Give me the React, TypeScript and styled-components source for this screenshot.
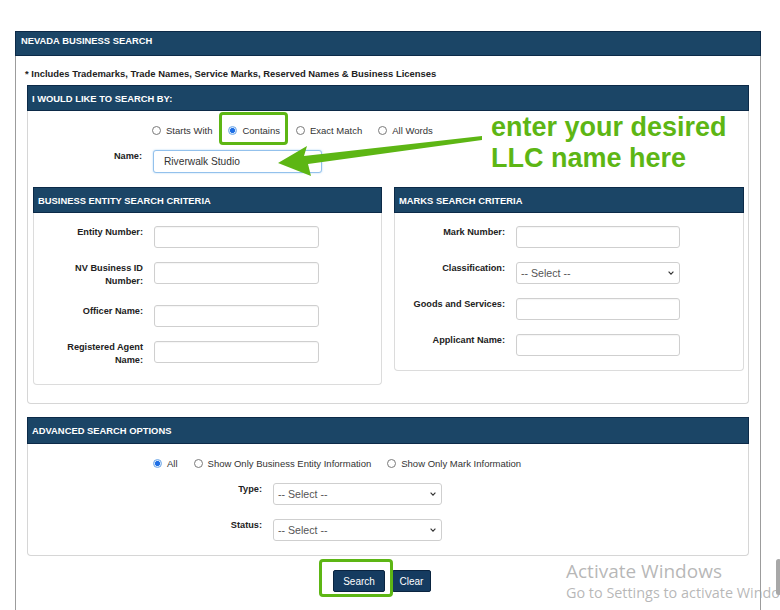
import React from "react";
import styled, { createGlobalStyle } from "styled-components";

const navy = "#1b4566";
const navyEdge = "#0c2a48";
const green = "#5db614";

const Global = createGlobalStyle`
  html, body { margin: 0; padding: 0; background: #fff; overflow: hidden; }
  body { font-family: "Liberation Sans", Arial, Helvetica, sans-serif; color: #222; }
  * { box-sizing: border-box; }
`;

const Page = styled.div`
  position: relative;
  width: 780px;
  height: 610px;
  padding-top: 31px;
  overflow: hidden;
`;

const Outer = styled.section`
  margin-left: 15px;
  width: 746px;
  height: 579px;
  border-left: 1px solid #9c9c9c;
  border-right: 1px solid #9c9c9c;
`;

const OuterHeader = styled.div`
  margin: 0 -1px;
  height: 25px;
  background: ${navy};
  border: 1px solid ${navyEdge};
  padding: 2px 0 0 5px;
  color: #fff;
  font-weight: bold;
  font-size: 9.4px;
  line-height: 13px;
`;

const OuterBody = styled.div`
  padding: 0 11px;
`;

const Note = styled.div`
  margin: 11px 0 5px -2px;
  font-size: 9.45px;
  font-weight: bold;
  line-height: 13px;
  color: #222;
`;

const Panel = styled.div<{ $mt?: number }>`
  margin-top: ${(p) => p.$mt ?? 0}px;
  border: 1px solid #d6d6d6;
  border-top: none;
  border-radius: 0 0 4px 4px;
  background: #fff;
`;

const PanelHeader = styled.div<{ $h?: number }>`
  margin: 0 -1px;
  height: ${(p) => p.$h ?? 26}px;
  background: ${navy};
  border: 1px solid ${navyEdge};
  padding-left: 4px;
  display: flex;
  align-items: center;
  color: #fff;
  font-weight: bold;
  font-size: 9.4px;
`;

const PanelBody = styled.div<{ $pb?: number }>`
  padding: 12px 0 ${(p) => p.$pb ?? 0}px;
`;

const RadioRow = styled.div<{ $pl: number }>`
  display: flex;
  align-items: center;
  height: 14px;
  padding-left: ${(p) => p.$pl}px;
  margin-bottom: 13px;
`;

const RadioItem = styled.label`
  display: inline-flex;
  align-items: center;
  margin-right: 16px;
  font-size: 9.5px;
  color: #333;
  white-space: nowrap;
`;

const Radio = styled.input.attrs({ type: "radio" })`
  appearance: none;
  -webkit-appearance: none;
  width: 9px;
  height: 9px;
  margin: 0 5px 0 0;
  border: 1px solid #7a7a7a;
  border-radius: 50%;
  background: #fff;
  &:checked {
    border-color: #6fa8e8;
    background: radial-gradient(circle, #1f6fe5 0 2.2px, #d3e5fb 2.8px);
  }
`;

const FieldRow = styled.div<{ $label: number; $input: number }>`
  display: grid;
  grid-template-columns: ${(p) => p.$label}px ${(p) => p.$input}px;
  column-gap: 11px;
  align-items: start;
  margin-bottom: 14px;
`;

const FieldLabel = styled.label`
  text-align: right;
  font-size: 9.2px;
  font-weight: bold;
  line-height: 13px;
  margin-bottom: 3px;
  color: #222;
`;

const TextBox = styled.input<{ $focus?: boolean; $h?: number }>`
  display: block;
  width: 100%;
  height: ${(p) => p.$h ?? 22}px;
  margin: 0;
  padding: 0 0 0 10px;
  border: 1px solid ${(p) => (p.$focus ? "#93c1ec" : "#cfcfcf")};
  border-radius: 3px;
  box-shadow: ${(p) => (p.$focus ? "0 0 2px rgba(102,175,233,0.55)" : "inset 0 1px 1px rgba(0,0,0,0.04)")};
  background: #fff;
  font-family: "Liberation Sans", Arial, sans-serif;
  font-size: 10.2px;
  color: #333;
  outline: none;
`;

const SelectWrap = styled.div`
  position: relative;
  height: 22px;
`;

const SelectBox = styled.select`
  appearance: none;
  -webkit-appearance: none;
  display: block;
  width: 100%;
  height: 22px;
  margin: 0;
  padding: 0 0 0 4px;
  border: 1px solid #cfcfcf;
  border-radius: 3px;
  background: #fff;
  font-family: "Liberation Sans", Arial, sans-serif;
  font-size: 10.6px;
  color: #555;
  outline: none;
`;

const Chevron = styled.svg`
  position: absolute;
  right: 6px;
  top: 9px;
  width: 6px;
  height: 4px;
  pointer-events: none;
`;

const BoxGrid = styled.div`
  display: grid;
  grid-template-columns: 349px 350px;
  column-gap: 12px;
  align-items: start;
  padding: 0 4px 18px 5px;
`;

const Box = styled.div`
  border: 1px solid #dcdcdc;
  border-top: none;
  border-radius: 0 0 4px 4px;
`;

const BoxBody = styled.div`
  padding-top: 13px;
`;

const ButtonRow = styled.div`
  display: flex;
  gap: 7px;
  margin-top: 14px;
  padding-left: 306px;
`;

const Button = styled.button<{ $w: number }>`
  width: ${(p) => p.$w}px;
  height: 22px;
  padding: 0;
  border: 1px solid #0a2440;
  border-radius: 2px;
  background: #153b60;
  color: #fff;
  font-family: "Liberation Sans", Arial, sans-serif;
  font-size: 10px;
`;

const Highlight = styled.div<{ $x: number; $y: number; $w: number; $h: number }>`
  position: absolute;
  left: ${(p) => p.$x}px;
  top: ${(p) => p.$y}px;
  width: ${(p) => p.$w}px;
  height: ${(p) => p.$h}px;
  border: 3px solid ${green};
  border-radius: 4px;
  pointer-events: none;
`;

const ArrowLayer = styled.svg`
  position: absolute;
  left: 0;
  top: 0;
  width: 780px;
  height: 610px;
  pointer-events: none;
`;

const Annotation = styled.div`
  position: absolute;
  left: 491px;
  top: 112px;
  color: ${green};
  font-family: "Liberation Sans", Arial, sans-serif;
  font-weight: bold;
  font-size: 27px;
  line-height: 31px;
  white-space: nowrap;
`;

const Watermark = styled.div`
  position: absolute;
  left: 566px;
  top: 559px;
  font-family: "Open Sans", "Noto Sans", sans-serif;
  color: rgba(160, 160, 160, 0.75);
  white-space: nowrap;
  pointer-events: none;
`;

const WatermarkTitle = styled.div`
  font-size: 19px;
  line-height: 25px;
`;

const WatermarkSub = styled.div`
  font-size: 14.4px;
  line-height: 18px;
`;

const ScrollThumb = styled.div`
  position: absolute;
  left: 776px;
  top: 559px;
  width: 5px;
  height: 36px;
  border-radius: 3px;
  background: #a8a8a8;
`;

const Select: React.FC = () => (
  <SelectWrap>
    <SelectBox defaultValue="">
      <option value="">-- Select --</option>
    </SelectBox>
    <Chevron viewBox="0 0 6 4">
      <path d="M0.6 0.6 L3 3.2 L5.4 0.6" fill="none" stroke="#333" strokeWidth="1.1" />
    </Chevron>
  </SelectWrap>
);

type Field = { label: React.ReactNode; select?: boolean };

const entityFields: Field[] = [
  { label: "Entity Number:" },
  { label: <>NV Business ID<br />Number:</> },
  { label: "Officer Name:" },
  { label: <>Registered Agent<br />Name:</> },
];

const markFields: Field[] = [
  { label: "Mark Number:" },
  { label: "Classification:", select: true },
  { label: "Goods and Services:" },
  { label: "Applicant Name:" },
];

const FieldList: React.FC<{ fields: Field[]; labelW: number; inputW: number }> = ({ fields, labelW, inputW }) => (
  <>
    {fields.map((f, i) => (
      <FieldRow key={i} $label={labelW} $input={inputW}>
        <FieldLabel>{f.label}</FieldLabel>
        {f.select ? <Select /> : <TextBox />}
      </FieldRow>
    ))}
  </>
);

export default function App() {
  return (
    <>
      <Global />
      <Page>
        <Outer>
          <OuterHeader>NEVADA BUSINESS SEARCH</OuterHeader>
          <OuterBody>
            <Note>* Includes Trademarks, Trade Names, Service Marks, Reserved Names &amp; Business Licenses</Note>

            <Panel>
              <PanelHeader>I WOULD LIKE TO SEARCH BY:</PanelHeader>
              <PanelBody>
                <RadioRow $pl={124}>
                  <RadioItem><Radio name="m" />Starts With</RadioItem>
                  <RadioItem><Radio name="m" defaultChecked />Contains</RadioItem>
                  <RadioItem><Radio name="m" />Exact Match</RadioItem>
                  <RadioItem><Radio name="m" />All Words</RadioItem>
                </RadioRow>
                <FieldRow $label={114} $input={169}>
                  <FieldLabel>Name:</FieldLabel>
                  <TextBox $focus $h={23} defaultValue="Riverwalk Studio" />
                </FieldRow>
                <BoxGrid>
                  <Box>
                    <PanelHeader>BUSINESS ENTITY SEARCH CRITERIA</PanelHeader>
                    <BoxBody>
                      <FieldList fields={entityFields} labelW={109} inputW={165} />
                    </BoxBody>
                  </Box>
                  <Box>
                    <PanelHeader>MARKS SEARCH CRITERIA</PanelHeader>
                    <BoxBody>
                      <FieldList fields={markFields} labelW={110} inputW={164} />
                    </BoxBody>
                  </Box>
                </BoxGrid>
              </PanelBody>
            </Panel>

            <Panel $mt={13}>
              <PanelHeader $h={27}>ADVANCED SEARCH OPTIONS</PanelHeader>
              <PanelBody $pb={0}>
                <RadioRow $pl={125}>
                  <RadioItem><Radio name="a" defaultChecked />All</RadioItem>
                  <RadioItem><Radio name="a" />Show Only Business Entity Information</RadioItem>
                  <RadioItem><Radio name="a" />Show Only Mark Information</RadioItem>
                </RadioRow>
                <FieldRow $label={234} $input={169}>
                  <FieldLabel>Type:</FieldLabel>
                  <Select />
                </FieldRow>
                <FieldRow $label={234} $input={169}>
                  <FieldLabel>Status:</FieldLabel>
                  <Select />
                </FieldRow>
              </PanelBody>
            </Panel>

            <ButtonRow>
              <Button $w={52}>Search</Button>
              <Button $w={39}>Clear</Button>
            </ButtonRow>
          </OuterBody>
        </Outer>

        <Highlight $x={219} $y={112} $w={69} $h={33} />
        <Highlight $x={319} $y={559} $w={74} $h={38} />
        <ArrowLayer viewBox="0 0 780 610">
          <polygon
            points="278,163 307,146 304,156 482,136 482,140 308,164 311,176"
            fill={green}
          />
        </ArrowLayer>
        <Annotation>
          enter your desired
          <br />
          LLC name here
        </Annotation>
        <Watermark>
          <WatermarkTitle>Activate Windows</WatermarkTitle>
          <WatermarkSub>Go to Settings to activate Windows.</WatermarkSub>
        </Watermark>
        <ScrollThumb />
      </Page>
    </>
  );
}
